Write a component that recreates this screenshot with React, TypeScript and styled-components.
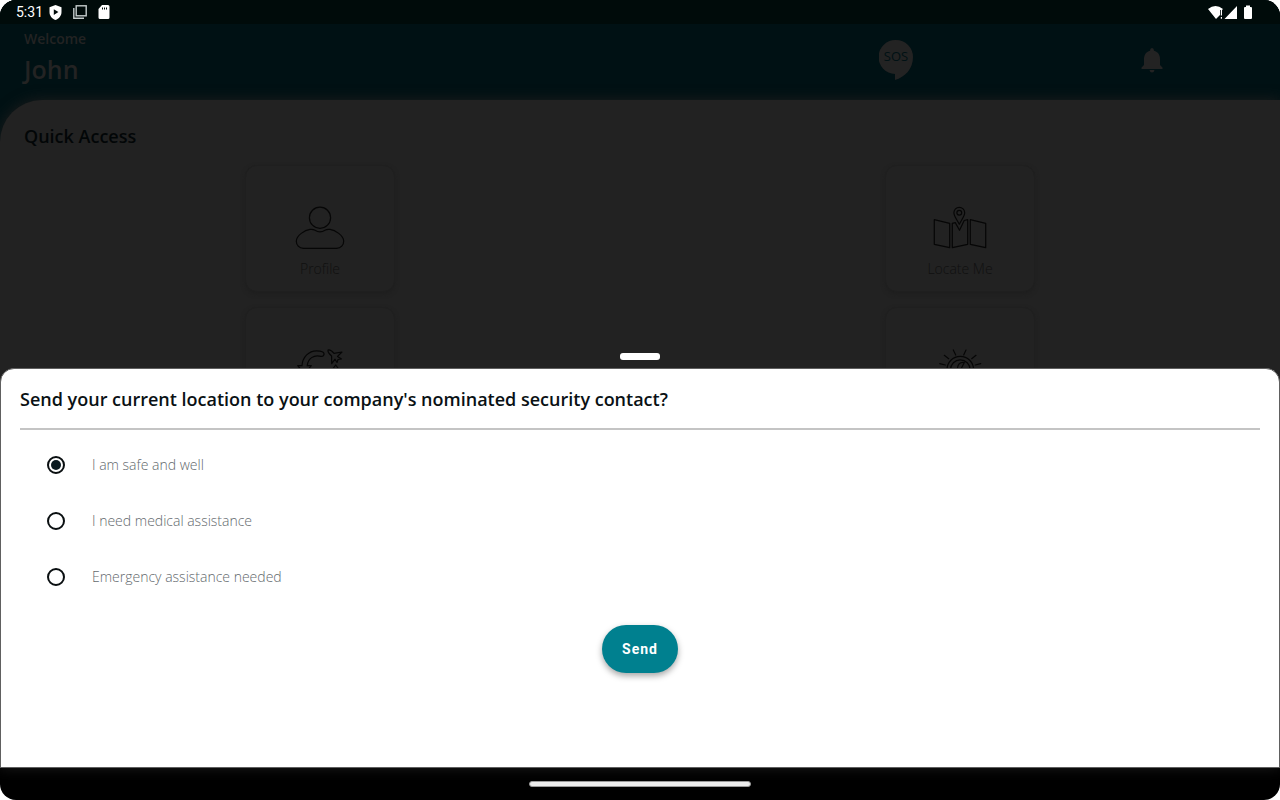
import React, { useState } from "react";
import styled, { createGlobalStyle } from "styled-components";

const GlobalStyle = createGlobalStyle`
  * { box-sizing: border-box; }
  body {
    margin: 0;
    background: #fff;
    font-family: "Open Sans", "Noto Sans", sans-serif;
  }
`;

const Device = styled.div`
  display: flex;
  flex-direction: column;
  min-height: 100vh;
  border-radius: 16px;
  overflow: hidden;
  background: #000;
`;

const Stage = styled.div`
  flex: 1;
  display: grid;
`;

const Home = styled.div`
  grid-area: 1 / 1;
  display: flex;
  flex-direction: column;
  background: #001114;
`;

const StatusBar = styled.div`
  display: flex;
  align-items: center;
  justify-content: space-between;
  height: 24px;
  padding: 0 26px 0 16px;
  background: #000b0a;
  color: #fff;
  font: 400 14px/24px Roboto, sans-serif;
`;

const StatusGroup = styled.div<{ $gap: number }>`
  display: flex;
  align-items: center;
  gap: ${(p) => p.$gap}px;
`;

const Header = styled.header`
  display: grid;
  grid-template-columns: 3fr 1fr 1fr;
  align-items: center;
  height: 76px;
  padding-bottom: 4px;
  color: #232323;
`;

const Welcome = styled.div`
  padding: 0 0 6px 24px;
`;

const Greeting = styled.div`
  font-size: 14px;
  font-weight: 600;
  line-height: 24px;
`;

const UserName = styled.div`
  font-size: 25px;
  font-weight: 600;
  line-height: 36px;
`;

const HeaderButton = styled.button`
  display: flex;
  justify-self: center;
  padding: 0;
  border: 0;
  background: none;
  color: #232323;
`;

const Content = styled.main`
  flex: 1;
  padding: 24px 0;
  border-top-left-radius: 42px;
  background: #222;
  box-shadow: 0 0 14px #1c1c1c;
`;

const SectionTitle = styled.h1`
  margin: 0 0 17px 24px;
  font-size: 18px;
  font-weight: 600;
  line-height: 24px;
  color: #020607;
`;

const TileGrid = styled.div`
  display: grid;
  grid-template-columns: 1fr 1fr;
  justify-items: center;
  row-gap: 15px;
`;

const Tile = styled.button`
  display: flex;
  flex-direction: column;
  align-items: center;
  width: 150px;
  height: 127px;
  padding: 38px 0 0;
  border: 1px solid #1f1f1f;
  border-radius: 12px;
  background: #222;
  box-shadow: 0 2px 4px #1e1e1e;
  color: #101010;
  font: 300 14px/20px "Open Sans", sans-serif;
`;

const TileIcon = styled.svg`
  width: 60px;
  height: 48px;
  margin-bottom: 7px;
  fill: none;
  stroke: #060606;
  stroke-width: 1.2;
  stroke-linejoin: round;
  stroke-linecap: round;
`;

const SheetLayer = styled.div`
  grid-area: 1 / 1;
  align-self: end;
  z-index: 1;
`;

const DragHandle = styled.div`
  width: 40px;
  height: 7px;
  margin: 0 auto 8px;
  border-radius: 3px;
  background: #fff;
`;

const Sheet = styled.form`
  display: flex;
  flex-direction: column;
  min-height: 400px;
  padding: 18px 19px;
  border: 1px solid #606060;
  border-radius: 14px 14px 0 0;
  background: #fff;
`;

const SheetTitle = styled.h2`
  margin: 0;
  padding-bottom: 17px;
  border-bottom: 2px solid #c4c4c4;
  font-size: 18px;
  font-weight: 600;
  line-height: 24px;
  color: #0a1114;
`;

const Options = styled.div`
  display: flex;
  flex-direction: column;
  padding: 7px 0 20px;
`;

const Option = styled.label`
  display: flex;
  align-items: center;
  gap: 27px;
  height: 56px;
  padding-left: 27px;
  color: #63696d;
  font-size: 14px;
  font-weight: 300;
  line-height: 20px;
`;

const Radio = styled.input`
  appearance: none;
  display: grid;
  place-items: center;
  width: 18px;
  height: 18px;
  margin: 0;
  border: 2px solid #0a0f11;
  border-radius: 50%;

  &:checked::before {
    content: "";
    width: 10px;
    height: 10px;
    border-radius: 50%;
    background: #0a1a20;
  }
`;

const SendButton = styled.button`
  align-self: center;
  height: 48px;
  padding: 0 20px;
  border: 0;
  border-radius: 24px;
  background: #00808f;
  box-shadow: 0 3px 6px rgba(0, 0, 0, 0.35);
  color: #fff;
  font: 700 14px/20px Roboto, sans-serif;
  letter-spacing: 1px;
`;

const NavBar = styled.div`
  display: flex;
  align-items: center;
  justify-content: center;
  height: 32px;
`;

const HomeIndicator = styled.div`
  width: 222px;
  height: 6px;
  border-radius: 3px;
  border: 1px solid #999;
  background: #ececec;
`;

const tiles = [
  {
    name: "Profile",
    label: "Profile",
    icon: (
      <>
        <circle cx="30" cy="13.7" r="10.6" />
        <path d="M13.5 44.3H46.5C51 44.3 53.7 41 53.7 37.2C53.7 31.5 45 26 40 25.4C37.5 25.1 36.5 25.3 35 26.2C32 28.2 28 28.2 25 26.2C23.5 25.3 22.5 25.1 20 25.4C15 26 6.3 31.5 6.3 37.2C6.3 41 9 44.3 13.5 44.3Z" />
      </>
    ),
  },
  {
    name: "Locate Me",
    label: "Locate Me",
    icon: (
      <>
        <path d="M4.3 15.7 19.7 19.3V43.7L4.3 40.3ZM40.3 15.7 55.7 19.3V43.7L40.3 40.3ZM25.3 18.6 22.3 19.3V43.7L37.7 40.3V15.7L34.2 16.5 29.5 26.3Z" />
        <path d="M29.3 20.3C27.5 16.5 23.9 12 23.9 8.7A5.4 5.4 0 0 1 34.7 8.7C34.7 12 31.1 16.5 29.3 20.3Z" />
        <circle cx="29.3" cy="8.7" r="2.4" />
      </>
    ),
  },
  {
    name: "Travel",
    icon: (
      <>
        <path d="M12 19.7C12.5 11 19 4.7 26.7 4.8C29 4.8 30.8 5 32.3 5.7C35.5 7.2 33.8 11 31 10.3C23.5 8.5 18 12.5 17.2 19.7H21.3L14.5 28 7.7 19.7Z" />
        <path d="M38 4Q40.5 3.2 44 7.4L52 6 47.5 10.4 51.5 13 48 13.5 47 16.5 45 13.2 41.7 17.7 41.6 10Q37.5 6.5 38 4Z" />
        <path d="M43.5 22 45.7 19 48 22" />
      </>
    ),
  },
  {
    name: "Alerts",
    icon: (
      <>
        <circle cx="30.3" cy="23.7" r="13.3" />
        <circle cx="30.3" cy="23.7" r="9.8" />
        <path d="M23.3 4 25.7 9M36 4 33.7 9M14.3 9.3 18.7 12.7M46 9.3 41.7 12.7M9.7 17.7 15.3 19M50.7 17.7 45.3 19M34.3 16.5 30 25M34.3 16.5C30 16 28 18 27.5 22" />
      </>
    ),
  },
];

const options = ["I am safe and well", "I need medical assistance", "Emergency assistance needed"];

export default function App() {
  const [choice, setChoice] = useState(options[0]);

  return (
    <Device>
      <GlobalStyle />
      <Stage>
        <Home>
          <StatusBar>
            <StatusGroup $gap={6}>
              <span>5:31</span>
              <StatusGroup $gap={11}>
                <svg width="13" height="15" viewBox="0 0 13 15">
                  <path fill="#fff" fillRule="evenodd" d="M6.5 0 12.5 2.3V7C12.5 10.8 10 13.7 6.5 15 3 13.7.5 10.8.5 7V2.3ZM4.8 4.2V10L9.4 7.1Z" />
                </svg>
                <svg width="14" height="14" viewBox="0 0 14 14" fill="none" stroke="#c4cccc" strokeWidth="1.4">
                  <rect x="3.2" y=".8" width="10" height="10" />
                  <path d="M.8 3V13.2H11" />
                </svg>
                <svg width="12" height="14" viewBox="0 0 12 14">
                  <path fill="#fff" fillRule="evenodd" d="M4 0H10Q11.5 0 11.5 1.5V12.5Q11.5 14 10 14H2Q.5 14 .5 12.5V4ZM4 2.5V4.5H5V2.5ZM6 2.5V4.5H7V2.5ZM8 2.5V4.5H9V2.5Z" />
                </svg>
              </StatusGroup>
            </StatusGroup>
            <svg width="46" height="15" viewBox="0 0 46 15" fill="#fff">
              <path d="M0 4Q7.5-2 15 4L14 5H12V10L8 14Z" />
              <path d="M12.8 5H14V10.5H12.8ZM12.8 12H14V13.8H12.8ZM29 1V14H16.5Z" />
              <path d="M38 .5H42V2H43Q44 2 44 3V13Q44 14 43 14H37Q36 14 36 13V3Q36 2 37 2H38Z" />
            </svg>
          </StatusBar>
          <Header>
            <Welcome>
              <Greeting>Welcome</Greeting>
              <UserName>John</UserName>
            </Welcome>
            <HeaderButton aria-label="SOS">
              <svg width="34" height="40" viewBox="0 0 34 40">
                <path fill="currentColor" d="M17 0A17 17 0 0 1 34 17C34 29 26 37 16 40V34A17 17 0 0 1 17 0Z" />
                <text x="17" y="21" textAnchor="middle" fontFamily="Open Sans, sans-serif" fontSize="13" fill="#001114">SOS</text>
              </svg>
            </HeaderButton>
            <HeaderButton aria-label="Notifications">
              <svg width="22" height="26" viewBox="0 0 22 26" fill="currentColor">
                <path d="M11 1Q13 1 13 3.7C17 4.7 19 8 19 12V18L21.5 20.5V22H.5V20.5L3 18V12C3 8 5 4.7 9 3.7Q9 1 11 1ZM8.500 23H13.5Q13 25.5 11 25.5T8.5 23Z" />
              </svg>
            </HeaderButton>
          </Header>
          <Content>
            <SectionTitle>Quick Access</SectionTitle>
            <TileGrid>
              {tiles.map((tile) => (
                <Tile key={tile.name} aria-label={tile.name}>
                  <TileIcon viewBox="0 0 60 48">{tile.icon}</TileIcon>
                  {tile.label}
                </Tile>
              ))}
            </TileGrid>
          </Content>
        </Home>
        <SheetLayer>
          <DragHandle />
          <Sheet onSubmit={(e) => e.preventDefault()}>
            <SheetTitle>Send your current location to your company's nominated security contact?</SheetTitle>
            <Options>
              {options.map((option) => (
                <Option key={option}>
                  <Radio type="radio" name="status" checked={choice === option} onChange={() => setChoice(option)} />
                  {option}
                </Option>
              ))}
            </Options>
            <SendButton type="submit">Send</SendButton>
          </Sheet>
        </SheetLayer>
      </Stage>
      <NavBar>
        <HomeIndicator />
      </NavBar>
    </Device>
  );
}
